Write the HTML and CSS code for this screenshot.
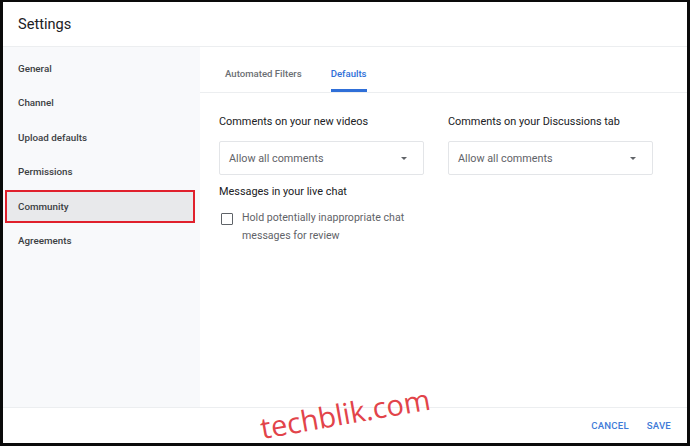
FILE: index.html
```html
<!doctype html>
<html lang="en">
<head>
    <meta charset="UTF-8">
    <title>Settings</title>
    <link rel="stylesheet" href="styles.css">
</head>
<body>

<div class="frame">
    <div class="header">
        <h3>Settings</h3>
    </div>
    <div class="main">
        <ul class="side-nav">
            <li>General</li>
            <li>Channel</li>
            <li>Upload defaults</li>
            <li>Permissions</li>
            <li class="active">Community</li>
            <li>Agreements</li>
        </ul>
        <div class="panel">
            <div class="tabs">
                <a href="#" class="tab">Automated Filters</a>
                <a href="#" class="tab tab-on">Defaults</a>
            </div>
            <div class="content">
                <div class="row">
                    <div class="field">
                        <p class="label">Comments on your new videos</p>
                        <div class="select">
                            <span>Allow all comments</span>
                            <i class="arrow"></i>
                        </div>
                    </div>
                    <div class="field">
                        <p class="label">Comments on your Discussions tab</p>
                        <div class="select">
                            <span>Allow all comments</span>
                            <i class="arrow"></i>
                        </div>
                    </div>
                </div>
                <p class="label label-chat">Messages in your live chat</p>
                <label class="check">
                    <span class="box"></span>
                    <span class="check-text">Hold potentially inappropriate chat<br>messages for review</span>
                </label>
            </div>
        </div>
    </div>
    <div class="footer">
        <a href="#" class="btn">Cancel</a>
        <a href="#" class="btn">Save</a>
    </div>
    <div class="watermark">techblik.com</div>
</div>

</body>
</html>
```

FILE: styles.css
```css
* {
    margin: 0;
    padding: 0;
    list-style: none;
    box-sizing: border-box;
}
html, body {
    width: 690px;
    height: 446px;
    overflow: hidden;
}
body {
    font-family: Roboto, "Liberation Sans", sans-serif;
    background: #000;
}
a {
    text-decoration: none;
}
.frame {
    position: relative;
    display: flex;
    flex-direction: column;
    width: 690px;
    height: 446px;
    border-style: solid;
    border-color: #0a0a0a;
    border-width: 2px 3px 3px 3px;
    background: #fff;
}
.header {
    height: 45px;
    padding-left: 15px;
    display: flex;
    align-items: center;
    border-bottom: 1px solid #eceef0;
}
.header h3 {
    font-size: 14.6px;
    font-weight: 400;
    color: #202124;
}
.main {
    flex: 1;
    display: flex;
}
.side-nav {
    width: 197px;
    padding-top: 5px;
    background: #f8f9fb;
}
.side-nav li {
    height: 33px;
    margin: 0 5px 1.4px 2px;
    padding-left: 11px;
    display: flex;
    align-items: center;
    font-size: 9.8px;
    font-weight: 500;
    color: #3c4043;
    border: 2px solid transparent;
}
.side-nav li.active {
    background: #e8e9eb;
    border-color: #e0202c;
}
.panel {
    flex: 1;
}
.tabs {
    height: 46px;
    padding-left: 25px;
    display: flex;
    gap: 29px;
    border-bottom: 1px solid #eceef0;
}
.tab {
    display: flex;
    align-items: center;
    padding-top: 10px;
    font-size: 9.6px;
    font-weight: 500;
    color: #6b6f74;
    border-bottom: 3px solid transparent;
}
.tab-on {
    color: #2f6fd8;
    border-bottom-color: #2f6fd8;
}
.content {
    padding: 22px 0 0 19px;
}
.row {
    display: flex;
    gap: 24px;
}
.field {
    width: 205px;
}
.label {
    font-size: 10.9px;
    font-weight: 400;
    color: #202124;
    line-height: 14px;
}
.select {
    margin-top: 12px;
    height: 34px;
    padding: 0 16px 0 9px;
    display: flex;
    align-items: center;
    justify-content: space-between;
    border: 1px solid #e3e5e8;
    border-radius: 2px;
    font-size: 10.8px;
    color: #5f6368;
}
.arrow {
    width: 0;
    height: 0;
    border-left: 3.5px solid transparent;
    border-right: 3.5px solid transparent;
    border-top: 3.5px solid #606368;
}
.label-chat {
    margin-top: 10px;
}
.check {
    margin-top: 13px;
    display: flex;
    align-items: flex-start;
    gap: 9px;
}
.box {
    flex: none;
    width: 12px;
    height: 12px;
    margin: 1px 0 0 2px;
    border: 1.6px solid #5f6368;
    border-radius: 1px;
}
.check-text {
    font-size: 10.6px;
    line-height: 18px;
    margin-top: -3px;
    color: #5f6368;
}
.footer {
    height: 36px;
    padding-right: 16px;
    display: flex;
    align-items: center;
    justify-content: flex-end;
    gap: 18px;
    border-top: 1px solid #eceef0;
}
.btn {
    font-size: 9.6px;
    font-weight: 500;
    text-transform: uppercase;
    color: #3f7bd8;
    letter-spacing: 0.2px;
}
/* watermark overlay */
.watermark {
    position: absolute;
    left: 260px;
    top: 411px;
    font-family: "Open Sans", sans-serif;
    font-size: 29px;
    line-height: 1;
    color: #e2444a;
    transform: rotate(-10deg);
    transform-origin: left bottom;
}
```
